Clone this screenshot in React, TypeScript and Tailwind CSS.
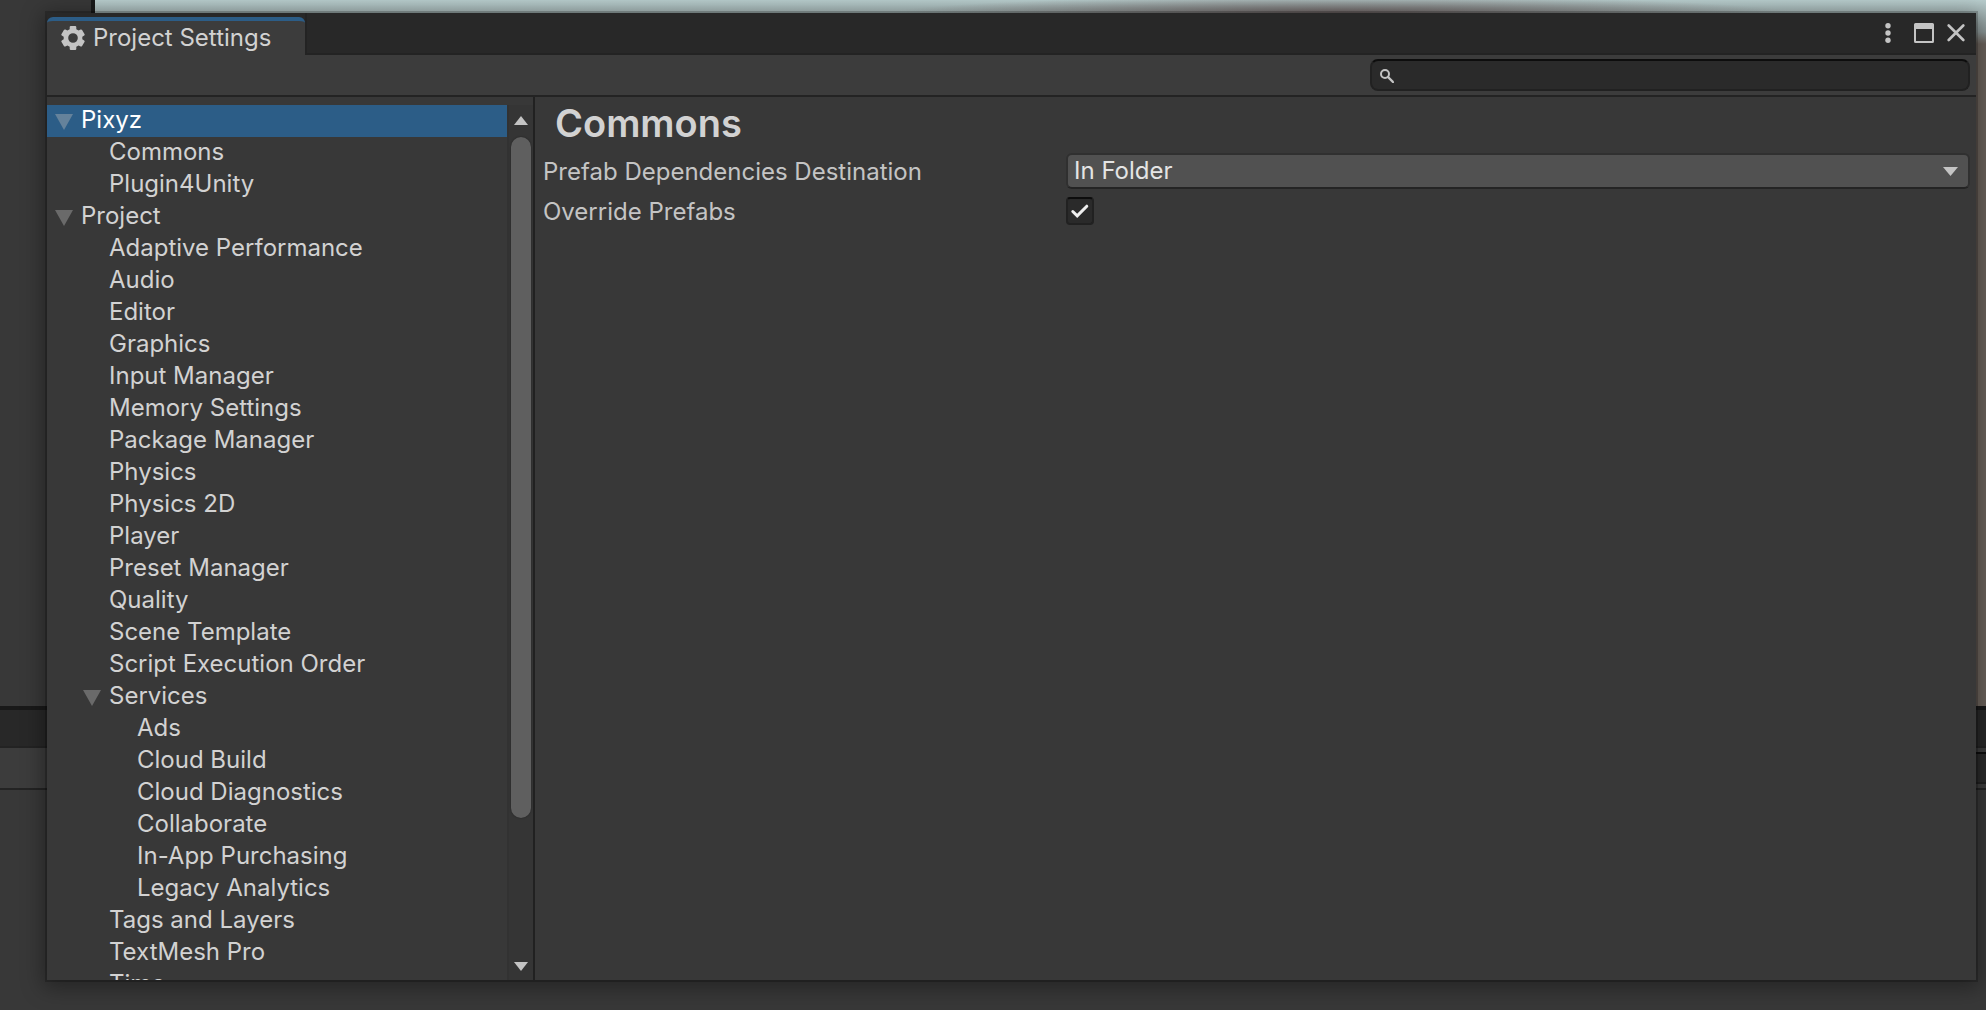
import { useState } from "react";

type Item = { label: string; level: number; open?: boolean };

const items: Item[] = [
  { label: "Pixyz", level: 0, open: true },
  { label: "Commons", level: 1 },
  { label: "Plugin4Unity", level: 1 },
  { label: "Project", level: 0, open: true },
  { label: "Adaptive Performance", level: 1 },
  { label: "Audio", level: 1 },
  { label: "Editor", level: 1 },
  { label: "Graphics", level: 1 },
  { label: "Input Manager", level: 1 },
  { label: "Memory Settings", level: 1 },
  { label: "Package Manager", level: 1 },
  { label: "Physics", level: 1 },
  { label: "Physics 2D", level: 1 },
  { label: "Player", level: 1 },
  { label: "Preset Manager", level: 1 },
  { label: "Quality", level: 1 },
  { label: "Scene Template", level: 1 },
  { label: "Script Execution Order", level: 1 },
  { label: "Services", level: 1, open: true },
  { label: "Ads", level: 2 },
  { label: "Cloud Build", level: 2 },
  { label: "Cloud Diagnostics", level: 2 },
  { label: "Collaborate", level: 2 },
  { label: "In-App Purchasing", level: 2 },
  { label: "Legacy Analytics", level: 2 },
  { label: "Tags and Layers", level: 1 },
  { label: "TextMesh Pro", level: 1 },
  { label: "Time", level: 1 },
];

const indent = ["pl-2", "pl-9", "pl-16"];

export default function App() {
  const [selected, setSelected] = useState("Pixyz");

  return (
    <div className="relative h-screen overflow-hidden bg-[#383838] font-['Inter',sans-serif] text-2xl text-[#d2d2d2]">
      <EditorBackdrop />

      {/* Project Settings window */}
      <div className="relative flex h-full flex-col pt-[13px] pr-[10px] pb-[30px] pl-[47px]">
        <main className="flex min-h-0 flex-1 flex-col bg-[#383838] shadow-[0_4px_20px_4px_rgba(0,0,0,0.35)] outline-2 outline-black/20">
          <TitleBar />
          <div className="flex h-[42px] shrink-0 items-start justify-end border-b-2 border-[#232323] bg-[#3c3c3c] pt-1 pr-1.5">
            <label className="flex h-8 w-[600px] items-center gap-2 rounded-lg border-2 border-[#212121] border-t-[#0d0d0d] bg-[#2a2a2a] px-2 pt-0.5">
              <SearchIcon />
              <input
                type="text"
                aria-label="Search settings"
                className="h-6 min-w-0 flex-1 bg-transparent text-xl outline-none"
              />
            </label>
          </div>

          <div className="flex min-h-0 flex-1">
            <nav className="flex w-[488px] shrink-0 border-r-2 border-[#212121] pt-2">
              <ul className="min-w-0 flex-1 overflow-hidden">
                {items.map((item) => (
                  <li key={item.label + item.level}>
                    <button
                      type="button"
                      onClick={() => setSelected(item.label)}
                      className={`flex h-8 w-full items-center text-left leading-8 ${indent[item.level]} ${
                        selected === item.label ? "bg-[#2c5d87] text-white" : ""
                      }`}
                    >
                      <span className="w-[26px] shrink-0">
                        {item.open && <Foldout active={selected === item.label} />}
                      </span>
                      <span className="-mt-0.5 whitespace-nowrap">{item.label}</span>
                    </button>
                  </li>
                ))}
              </ul>
              <ScrollBar />
            </nav>

            <section className="min-w-0 flex-1 pt-1 pr-1.5 pl-2">
              <h1 className="pl-3 text-[38px] leading-[44px] font-semibold">Commons</h1>
              <div className="mt-2 flex h-9 items-center text-[#c4c4c4]">
                <label htmlFor="destination" className="w-[523px] shrink-0 pt-0.5">
                  Prefab Dependencies Destination
                </label>
                <div className="relative h-9 min-w-0 flex-1">
                  <select
                    id="destination"
                    className="h-full w-full appearance-none rounded-md border-2 border-[#303030] border-b-[#242424] bg-[#515151] pl-1.5 leading-7 text-[#e4e4e4]"
                  >
                    <option>In Folder</option>
                    <option>Next to Prefab</option>
                  </select>
                  <svg width="15" height="9" viewBox="0 0 15 9" className="pointer-events-none absolute top-3.5 right-3">
                    <path d="M0 0H15L7.5 9Z" fill="#c4c4c4" />
                  </svg>
                </div>
              </div>
              <div className="mt-1 flex h-9 items-center text-[#c4c4c4]">
                <label htmlFor="override" className="w-[523px] shrink-0 pt-0.5">
                  Override Prefabs
                </label>
                <span className="relative size-7">
                  <input
                    id="override"
                    type="checkbox"
                    defaultChecked
                    className="peer block size-7 appearance-none rounded-sm border-2 border-[#212121] border-t-[#0d0d0d] bg-[#2a2a2a]"
                  />
                  <svg
                    viewBox="0 0 28 28"
                    className="pointer-events-none absolute inset-0 hidden size-7 peer-checked:block"
                  >
                    <path
                      d="M6.8 14.5L11.2 18.8L20.8 9.2"
                      fill="none"
                      stroke="#eee"
                      strokeWidth="3"
                      strokeLinecap="round"
                    />
                  </svg>
                </span>
              </div>
            </section>
          </div>
        </main>
      </div>
    </div>
  );
}

const TitleBar = () => (
  <header className="flex h-[42px] shrink-0 items-stretch bg-[#282828]">
    <div className="mt-1 flex w-[258px] items-center gap-2 rounded-t-md border-t-4 border-[#2c5d87] bg-[#3c3c3c] pl-3.5">
      <GearIcon />
      <span className="whitespace-nowrap">Project Settings</span>
    </div>
    <div className="flex flex-1 items-start justify-end border-b-2 border-l-2 border-[#232323] pt-2.5 pr-[11px]">
      <button type="button" aria-label="Menu" className="mr-[23px]">
        <svg width="6" height="20" viewBox="0 0 6 20" fill="#c4c4c4">
          <circle cx="3" cy="2.7" r="2.7" />
          <circle cx="3" cy="10" r="2.7" />
          <circle cx="3" cy="17.3" r="2.7" />
        </svg>
      </button>
      <button type="button" aria-label="Maximize" className="mr-[13px]">
        <svg width="20" height="20" viewBox="0 0 20 20" fill="#c4c4c4">
          <path
            fillRule="evenodd"
            d="M1.5 0H18.5Q20 0 20 1.5V18.5Q20 20 18.5 20H1.5Q0 20 0 18.5V1.5Q0 0 1.5 0ZM2 6V18H18V6Z"
          />
        </svg>
      </button>
      <button type="button" aria-label="Close">
        <svg width="18" height="20" viewBox="0 0 18 20" fill="none" stroke="#c4c4c4" strokeWidth="2.6" strokeLinecap="round">
          <path d="M1.7 2.5L16.3 17M16.3 2.5L1.7 17" />
        </svg>
      </button>
    </div>
  </header>
);

const ScrollBar = () => (
  <div className="flex w-[26px] shrink-0 flex-col items-center border-l-2 border-[#323232] bg-[#353535] pt-[11px] pb-[9px]">
    <svg width="14" height="9" viewBox="0 0 14 9" className="shrink-0">
      <path d="M0 9H14L7 0Z" fill="#c4c4c4" />
    </svg>
    <div className="mt-3 flex min-h-0 w-5 flex-1 flex-col">
      <div className="h-[82.5%] rounded-full bg-[#5f5f5f] shadow-[0_0_2px_rgba(0,0,0,0.4)]" />
    </div>
    <svg width="14" height="9" viewBox="0 0 14 9" className="shrink-0">
      <path d="M0 0H14L7 9Z" fill="#c4c4c4" />
    </svg>
  </div>
);

const Foldout = ({ active }: { active: boolean }) => (
  <svg width="18" height="16" viewBox="0 0 18 16" className="mt-0.5">
    <path d="M0 0H18L9 16Z" fill={active ? "#65829b" : "#6a6a6a"} />
  </svg>
);

const GearIcon = () => (
  <svg width="24" height="24" viewBox="0 0 24 24" className="shrink-0">
    <path
      fill="#c4c4c4"
      fillRule="evenodd"
      d="M9.8 0H14.2Q15.2 0 15.3 1V3.3L17.6 4.6L19.6 3.6Q20.5 3.2 21.1 4L23.6 8.2Q24 9 23.2 9.6L21.3 10.7V13.3L23.2 14.4Q24 15 23.6 15.8L21.1 20Q20.5 20.8 19.6 20.4L17.6 19.4L15.3 20.7V23Q15.2 24 14.2 24H9.8Q8.8 24 8.7 23V20.7L6.4 19.4L4.4 20.4Q3.5 20.8 2.9 20L.4 15.8Q0 15 .8 14.4L2.7 13.3V10.7L.8 9.6Q0 9 .4 8.2L2.9 4Q3.5 3.2 4.4 3.6L6.4 4.6L8.7 3.3V1Q8.8 0 9.8 0ZM12 7.2A4.8 4.8 0 1 0 12 16.8A4.8 4.8 0 1 0 12 7.2Z"
    />
  </svg>
);

const SearchIcon = () => (
  <svg width="14" height="14" viewBox="0 0 14 14" fill="none" stroke="#c4c4c4" className="shrink-0">
    <circle cx="5" cy="5" r="4" strokeWidth="2" />
    <path d="M8 8L13 13" strokeWidth="2.4" strokeLinecap="round" />
  </svg>
);

// Main editor panels showing around the floating window
const EditorBackdrop = () => (
  <div aria-hidden="true" className="absolute inset-0 flex flex-col">
    <div className="flex h-[706px]">
      <div className="w-[95px] border-r-4 border-[#191919]" />
      <div className="flex flex-1 flex-col bg-[#6b625b]">
        <div className="h-8 bg-linear-to-b from-[#b8cdcd] to-[#8b9696]">
          <div className="h-full bg-[radial-gradient(24%_18px_at_66%_14px,#6b6060,#6b606000)]" />
        </div>
        <div className="h-3 bg-linear-to-b from-[#8b9696] to-[#6b625b]" />
      </div>
    </div>
    <div className="h-10 border-t-4 border-[#191919] bg-[#282828]" />
    <div className="flex h-11 justify-end border-y-2 border-[#232323] bg-[#3c3c3c]">
      <div className="my-1 w-20 border-y-2 border-[#212121] border-t-[#0d0d0d] bg-[#2a2a2a]" />
    </div>
  </div>
);
